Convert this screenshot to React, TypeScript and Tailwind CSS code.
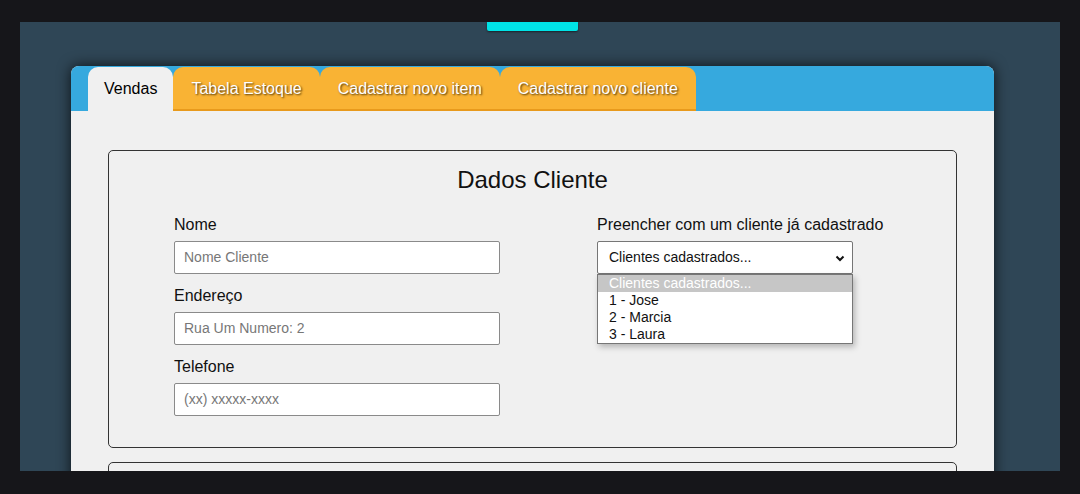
const font = { fontFamily: '"Liberation Sans", Arial, sans-serif' };

const tabs = ["Tabela Estoque", "Cadastrar novo item", "Cadastrar novo cliente"];
const clientes = ["1 - Jose", "2 - Marcia", "3 - Laura"];

function Field({ label, placeholder }: { label: string; placeholder: string }) {
  return (
    <div className="flex flex-col">
      <label className="h-[18px] pt-[1px] text-[16px] leading-[18px] text-[#111]">{label}</label>
      <div className="mt-[8px] flex h-[33px] w-[326px] items-center rounded-[2px] border border-[#8a8a8a] bg-white px-[9px] text-[14px] text-[#777]">
        {placeholder}
      </div>
    </div>
  );
}

export default function App() {
  return (
    <div style={font} className="h-[494px] w-[1080px] overflow-hidden bg-[#16161a] px-[20px] pt-[22px]">
      <div className="h-[449px] overflow-hidden bg-[#2f4656] pl-[51px] pr-[66px]">
        {/* cut-off button */}
        <div className="flex justify-center">
          <div className="h-[9px] w-[91px] rounded-b-[2px] bg-[#00e3e6] shadow-[0_1px_2px_rgba(0,0,0,0.5)]" />
        </div>

        <div className="mt-[35px] overflow-hidden rounded-t-[8px] bg-[#f0f0f0] shadow-[0_0_14px_rgba(0,0,0,0.75)]">
          {/* tab strip */}
          <div className="flex h-[45px] items-end bg-[#36a9de] pl-[17px]">
            <div className="flex h-[44px] items-center rounded-t-[10px] bg-[#f0f0f0] px-[16px] text-[16px] text-black">
              Vendas
            </div>
            {tabs.map((t) => (
              <div
                key={t}
                className="flex h-[44px] items-center rounded-t-[10px] border-b-2 border-[#e89a1c] bg-[#f9b334] px-[18px] pt-[2px] text-[16px] text-white [text-shadow:1px_1px_2px_#4a3208]"
              >
                {t}
              </div>
            ))}
          </div>

          {/* body */}
          <div className="px-[37px] pt-[39px] pb-[20px]">
            <div className="rounded-[5px] border border-[#333] px-[65px] pt-[15px] pb-[31px]">
              <h2 className="h-[28px] text-center text-[24px] leading-[28px] text-[#111]">Dados Cliente</h2>
              <div className="mt-[21px] flex">
                <div className="flex w-[423px] flex-col gap-[12px]">
                  <Field label="Nome" placeholder="Nome Cliente" />
                  <Field label="Endereço" placeholder="Rua Um Numero: 2" />
                  <Field label="Telefone" placeholder="(xx) xxxxx-xxxx" />
                </div>
                <div className="flex flex-col">
                  <label className="h-[18px] pt-[1px] text-[16px] leading-[18px] text-[#111]">
                    Preencher com um cliente já cadastrado
                  </label>
                  <div className="relative mt-[8px]">
                    <div className="flex h-[33px] w-[256px] items-center justify-between rounded-[2px] border border-[#767676] bg-white pl-[11px] pr-[6px] text-[14px] text-[#111]">
                      <span>Clientes cadastrados...</span>
                      <svg width="12" height="12" viewBox="0 0 12 12">
                        <path d="M2.5 4.5 L6 8 L9.5 4.5" fill="none" stroke="#111" strokeWidth="2" />
                      </svg>
                    </div>
                    <div className="absolute left-0 top-[33px] w-[256px] border border-[#767676] bg-white text-[14px] leading-[17px] text-[#111] shadow-[2px_3px_6px_rgba(0,0,0,0.25)]">
                      <div className="bg-[#c6c6c6] px-[11px] text-white">Clientes cadastrados...</div>
                      {clientes.map((c) => (
                        <div key={c} className="px-[11px]">
                          {c}
                        </div>
                      ))}
                    </div>
                  </div>
                </div>
              </div>
            </div>

            <div className="mt-[14px] h-[60px] rounded-[5px] border border-[#333]" />
          </div>
        </div>
      </div>
    </div>
  );
}
